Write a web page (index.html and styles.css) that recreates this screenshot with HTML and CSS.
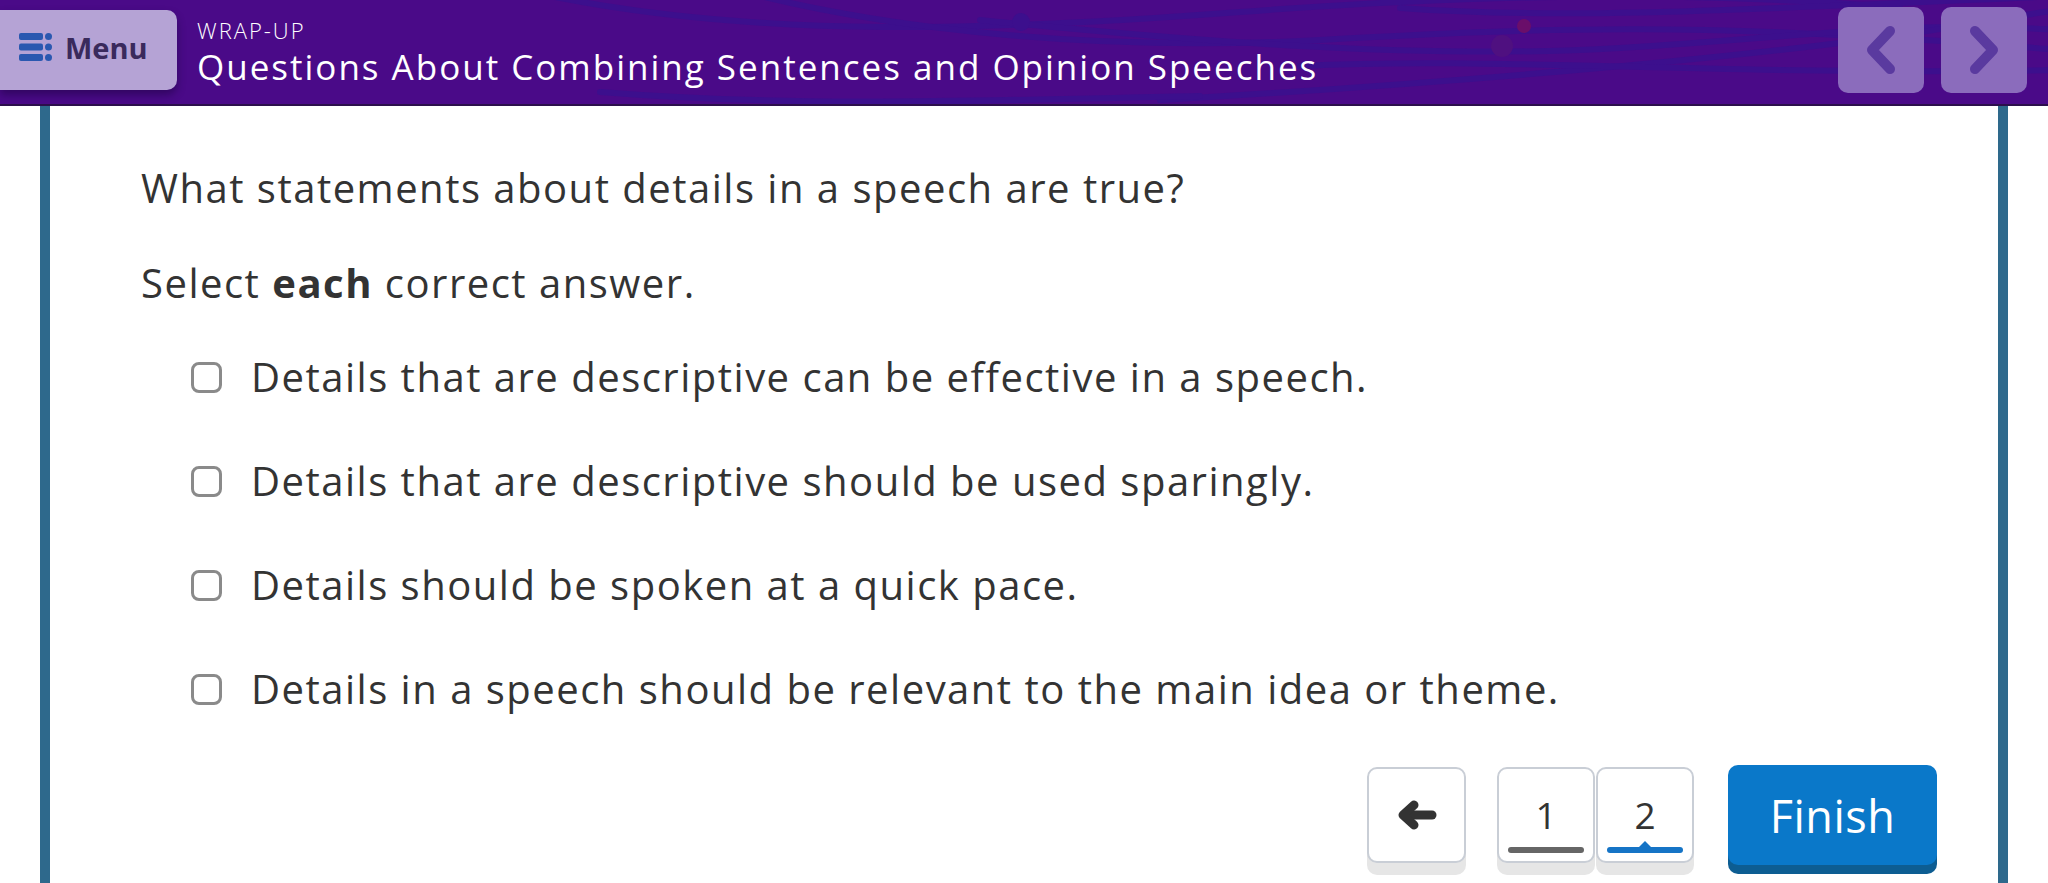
FILE: index.html
```html
<!DOCTYPE html>
<html lang="en">
<head>
<meta charset="utf-8">
<title>Wrap-Up</title>
<link rel="stylesheet" href="styles.css">
</head>
<body>
<header class="topbar">
  <svg class="swirls" width="2048" height="104" viewBox="0 0 2048 104" aria-hidden="true">
    <g fill="none" stroke="#3c0f8d" stroke-width="6" stroke-linecap="round">
      <path d="M540 -6 C 760 40, 1000 30, 1240 12 S 1700 -10, 1900 8"/>
      <path d="M760 -4 C 900 30, 1100 52, 1320 40 S 1700 20, 2060 50"/>
      <path d="M980 20 C 1180 40, 1420 60, 1620 48 S 1900 20, 2060 30"/>
      <path d="M1160 100 C 1400 86, 1600 70, 1780 50 S 1980 20, 2060 10"/>
      <path d="M1400 8 C 1560 20, 1740 10, 2060 -4"/>
      <path d="M600 92 C 800 108, 1000 100, 1200 96"/>
      <path d="M1300 66 C 1500 56, 1700 76, 2060 70"/>
    </g>
    <circle cx="1021" cy="22" r="9" fill="#3c0f8d"/>
    <circle cx="1502" cy="46" r="11" fill="#4f1080"/>
    <circle cx="1524" cy="26" r="7" fill="#6a0e6a"/>
    <circle cx="1913" cy="22" r="9" fill="#7a3a8a"/>
  </svg>
  <button class="menu-btn" type="button">
    <svg class="menu-icon" width="34" height="28" viewBox="0 0 34 28" aria-hidden="true">
      <g fill="#2a58b0">
        <rect x="0" y="0" width="24" height="7" rx="2"/>
        <rect x="0" y="10.5" width="24" height="7" rx="2"/>
        <rect x="0" y="21" width="24" height="7" rx="2"/>
        <circle cx="29.5" cy="3.5" r="3.5"/>
        <circle cx="29.5" cy="14" r="3.5"/>
        <circle cx="29.5" cy="24.5" r="3.5"/>
      </g>
    </svg>
    <span>Menu</span>
  </button>
  <div class="titles">
    <div class="kicker">WRAP-UP</div>
    <h1 class="title">Questions About Combining Sentences and Opinion Speeches</h1>
  </div>
  <nav class="slide-nav">
    <button class="nav-btn" type="button" aria-label="Previous">
      <svg width="34" height="50" viewBox="0 0 34 50"><polyline points="26,6 8,25 26,44" fill="none" stroke="#5a3a9f" stroke-width="10" stroke-linecap="round" stroke-linejoin="round"/></svg>
    </button>
    <button class="nav-btn" type="button" aria-label="Next">
      <svg width="34" height="50" viewBox="0 0 34 50"><polyline points="8,6 26,25 8,44" fill="none" stroke="#5a3a9f" stroke-width="10" stroke-linecap="round" stroke-linejoin="round"/></svg>
    </button>
  </nav>
</header>

<main class="card">
  <p class="question">What statements about details in a speech are true?</p>
  <p class="instruction">Select <strong>each</strong> correct answer.</p>
  <ul class="options">
    <li class="option"><span class="box"></span><span>Details that are descriptive can be effective in a speech.</span></li>
    <li class="option"><span class="box"></span><span>Details that are descriptive should be used sparingly.</span></li>
    <li class="option"><span class="box"></span><span>Details should be spoken at a quick pace.</span></li>
    <li class="option"><span class="box"></span><span>Details in a speech should be relevant to the main idea or theme.</span></li>
  </ul>
  <div class="controls">
    <button class="back-btn" type="button" aria-label="Back">
      <svg width="40" height="30" viewBox="0 0 40 30"><g fill="none" stroke="#333" stroke-width="9" stroke-linecap="round" stroke-linejoin="round"><line x1="35" y1="15" x2="8" y2="15"/><polyline points="17,5 6,15 17,25"/></g></svg>
    </button>
    <div class="pages">
      <button class="page" type="button"><span class="num">1</span><span class="bar"></span></button>
      <button class="page current" type="button"><span class="num">2</span><span class="bar"></span></button>
    </div>
    <button class="finish" type="button">Finish</button>
  </div>
</main>
</body>
</html>
```

FILE: styles.css
```css
* { box-sizing: border-box; }

html, body {
  margin: 0;
  padding: 0;
  height: 100%;
  overflow: hidden;
}

body {
  font-family: "Open Sans", "DejaVu Sans", sans-serif;
  background: #ffffff;
  color: #333333;
  display: flex;
  flex-direction: column;
}

button {
  font-family: inherit;
  cursor: pointer;
}

.topbar {
  position: relative;
  height: 106px;
  flex: none;
  background: #4a0a88;
  border-bottom: 2px solid #2c0f4c;
  display: flex;
  align-items: flex-start;
}

.swirls {
  position: absolute;
  left: 0;
  top: 0;
}

.menu-btn {
  position: relative;
  margin-top: 10px;
  width: 177px;
  height: 80px;
  border: none;
  border-radius: 0 10px 10px 0;
  background: #b5a3d5;
  box-shadow: 0 5px 8px rgba(20, 0, 50, 0.45);
  display: flex;
  align-items: center;
  padding: 0 0 6px 19px;
  gap: 12px;
  font-weight: 700;
  font-size: 29px;
  color: #3a2a5c;
}

.titles {
  position: relative;
  margin-left: 20px;
  padding-top: 17px;
  flex: 1;
  color: #ffffff;
}

.kicker {
  font-size: 22px;
  line-height: 26px;
  font-weight: 300;
  letter-spacing: 2px;
}

.title {
  margin: 4px 0 0 0;
  font-size: 35px;
  line-height: 40px;
  font-weight: 500;
  letter-spacing: 2px;
}

.slide-nav {
  position: relative;
  display: flex;
  gap: 17px;
  margin: 7px 21px 0 0;
}

.nav-btn {
  width: 86px;
  height: 86px;
  border: none;
  border-radius: 10px;
  background: #8b6cbc;
  display: flex;
  align-items: center;
  justify-content: center;
  padding: 0;
}

.card {
  flex: 1;
  margin: 0 40px;
  border-left: 10px solid #2e698c;
  border-right: 10px solid #2e698c;
  background: #ffffff;
  padding: 54px 61px 0 91px;
}

.question,
.instruction {
  margin: 0;
  font-size: 40px;
  line-height: 56px;
  font-weight: 400;
  letter-spacing: 1.5px;
  color: #333333;
}

.instruction {
  margin-top: 39px;
}

.instruction strong {
  font-weight: 700;
}

.options {
  list-style: none;
  margin: 38px 0 0 0;
  padding: 0 0 0 50px;
  display: flex;
  flex-direction: column;
  gap: 48px;
}

.option {
  display: flex;
  align-items: center;
  gap: 29px;
  font-size: 40px;
  line-height: 56px;
  letter-spacing: 1.5px;
  color: #333333;
}

.box {
  flex: none;
  width: 31px;
  height: 31px;
  border: 3px solid #8a8a8a;
  border-radius: 8px;
}

.controls {
  margin-top: 48px;
  display: flex;
  justify-content: flex-end;
  align-items: flex-start;
}

.back-btn {
  margin-top: 2px;
  width: 99px;
  height: 96px;
  border: 2px solid #c9ced6;
  border-radius: 10px;
  background: #ffffff;
  box-shadow: 0 12px 0 #e6e6e6;
  display: flex;
  align-items: center;
  justify-content: center;
  padding: 0;
}

.pages {
  margin: 2px 0 0 31px;
  display: flex;
}

.page {
  width: 98px;
  height: 96px;
  border: 2px solid #c9ced6;
  border-radius: 10px;
  background: #ffffff;
  box-shadow: 0 12px 0 #e6e6e6;
  display: flex;
  flex-direction: column;
  align-items: center;
  padding: 26px 0 0 0;
}

.page + .page {
  margin-left: 1px;
}

.num {
  font-size: 37px;
  line-height: 40px;
  color: #333333;
}

.bar {
  position: relative;
  margin-top: 12px;
  width: 76px;
  height: 6px;
  border-radius: 3px;
  background: #666666;
}

.current .bar {
  background: #1574c6;
}

.current .bar::after {
  content: "";
  position: absolute;
  left: 50%;
  top: -6px;
  margin-left: -7px;
  border-left: 7px solid transparent;
  border-right: 7px solid transparent;
  border-bottom: 7px solid #1574c6;
}

.finish {
  margin-left: 34px;
  width: 209px;
  height: 100px;
  border: none;
  border-radius: 10px;
  background: #0a78c9;
  box-shadow: 0 9px 0 #0d5d92;
  color: #ffffff;
  font-size: 45px;
  font-weight: 500;
  letter-spacing: 0.5px;
  padding: 0;
}
```
